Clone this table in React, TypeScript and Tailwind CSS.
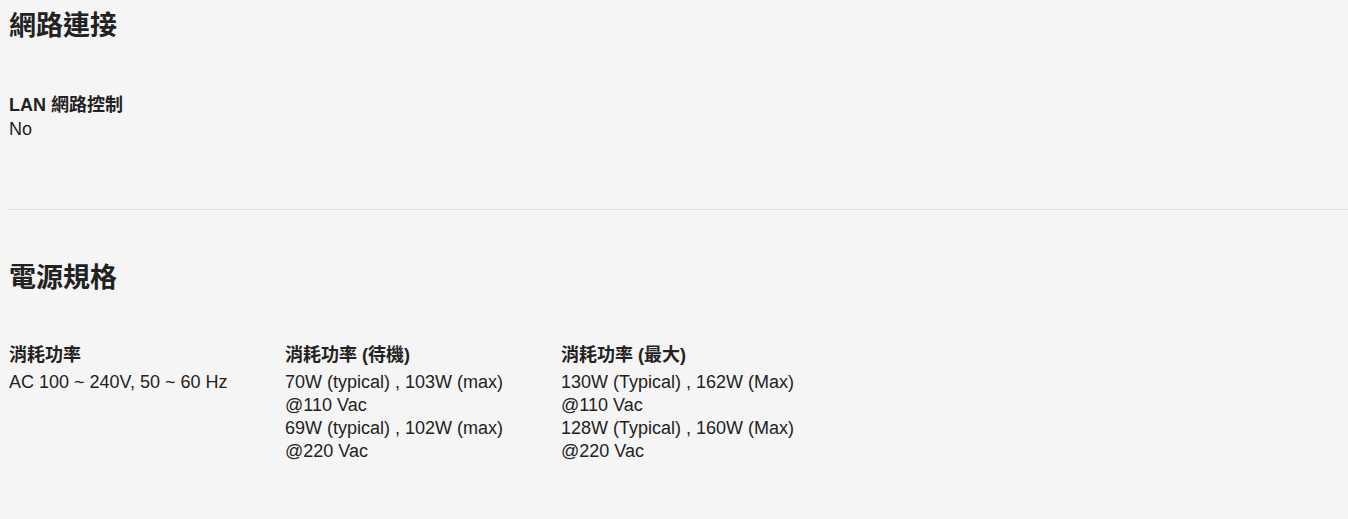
export default function App() {
  const font = { fontFamily: '"Liberation Sans", Arial, "Noto Sans CJK TC", sans-serif' };
  return (
    <div className="min-h-[519px] w-full bg-[#f5f5f5] text-[#222] pl-[9px]" style={font}>
      <section className="pt-[8px]">
        <h2 className="text-[27px] leading-[36px] font-bold">網路連接</h2>
        <div className="mt-[48px] grid grid-cols-[276px_276px_276px]">
          <div>
            <div className="text-[18px] leading-[26px] font-bold">LAN 網路控制</div>
            <div className="text-[18px] leading-[23px]">No</div>
          </div>
        </div>
      </section>
      <div className="mt-[68px] h-px bg-[#dcdcdc]" />
      <section className="pt-[50px]">
        <h2 className="text-[27px] leading-[36px] font-bold">電源規格</h2>
        <div className="mt-[46px] grid grid-cols-[276px_276px_276px]">
          <div>
            <div className="text-[18px] leading-[26px] font-bold">消耗功率</div>
            <div className="mt-[3px] text-[18px] leading-[23px]">AC 100 ~ 240V, 50 ~ 60 Hz</div>
          </div>
          <div>
            <div className="text-[18px] leading-[26px] font-bold">消耗功率 (待機)</div>
            <div className="mt-[3px] text-[18px] leading-[23px]">
              70W (typical) , 103W (max)
              <br />
              @110 Vac
              <br />
              69W (typical) , 102W (max)
              <br />
              @220 Vac
            </div>
          </div>
          <div>
            <div className="text-[18px] leading-[26px] font-bold">消耗功率 (最大)</div>
            <div className="mt-[3px] text-[18px] leading-[23px]">
              130W (Typical) , 162W (Max)
              <br />
              @110 Vac
              <br />
              128W (Typical) , 160W (Max)
              <br />
              @220 Vac
            </div>
          </div>
        </div>
      </section>
    </div>
  );
}
